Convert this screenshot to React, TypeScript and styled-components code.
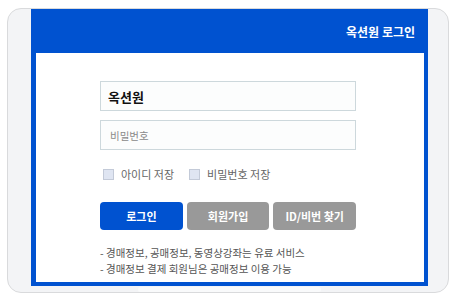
import styled, { createGlobalStyle } from "styled-components";

const GlobalStyle = createGlobalStyle`
    html, body {
        margin: 0;
        padding: 0;
        background: #fff;
        font-family: "Noto Sans CJK KR", "Noto Sans", sans-serif;
    }
`;

const App = () => {
    return (
        <>
            <GlobalStyle/>
            <Frame>
                <Panel>
                    <Header>
                        <HeaderTitle>옥션원 로그인</HeaderTitle>
                    </Header>
                    <Body>
                        <Field $filled>옥션원</Field>
                        <Field>비밀번호</Field>
                        <CheckRow>
                            <CheckItem>
                                <CheckBox/>
                                <CheckLabel>아이디 저장</CheckLabel>
                            </CheckItem>
                            <CheckItem>
                                <CheckBox/>
                                <CheckLabel>비밀번호 저장</CheckLabel>
                            </CheckItem>
                        </CheckRow>
                        <ButtonRow>
                            <Button $primary>로그인</Button>
                            <Button>회원가입</Button>
                            <Button>ID/비번 찾기</Button>
                        </ButtonRow>
                        <Notes>
                            <li>- 경매정보, 공매정보, 동영상강좌는 유료 서비스</li>
                            <li>- 경매정보 결제 회원님은 공매정보 이용 가능</li>
                        </Notes>
                    </Body>
                </Panel>
                <Peek/>
            </Frame>
        </>
    );
}

export default App;

const Frame = styled.div`
    margin: 8px 0 0 7px;
    width: 442px;
    height: 285px;
    box-sizing: border-box;
    border: 1px solid #d9dadc;
    border-radius: 14px;
    background: #f3f4f6;
    overflow: hidden;
    display: flex;
    flex-direction: column;
    padding-left: 23px;
`;

const Panel = styled.div`
    width: 397px;
    height: 277px;
    box-sizing: border-box;
    background: #0052d0;
    padding: 0 4px 4px 5px;
    display: flex;
    flex-direction: column;
    flex-shrink: 0;
`;

const Header = styled.div`
    height: 44px;
    display: flex;
    align-items: center;
    justify-content: flex-end;
    padding-right: 9px;
    flex-shrink: 0;
`;

const HeaderTitle = styled.span`
    color: #fff;
    font-size: 12px;
    font-weight: 700;
`;

const Body = styled.div`
    flex: 1;
    background: #fff;
    padding: 28px 68px 0 64px;
    display: flex;
    flex-direction: column;
`;

const Field = styled.div<{ $filled?: boolean }>`
    height: 30px;
    box-sizing: border-box;
    border: 1px solid #cdd8dc;
    background: #fcfdfd;
    display: flex;
    align-items: center;
    padding-left: ${p => p.$filled ? 7 : 9}px;
    margin-bottom: 9px;
    color: ${p => p.$filled ? '#111' : '#8a8a8a'};
    font-size: ${p => p.$filled ? 13 : 10.5}px;
    font-weight: ${p => p.$filled ? 700 : 400};
`;

const CheckRow = styled.div`
    display: flex;
    align-items: center;
    gap: 15px;
    margin-top: 7px;
    padding-left: 3px;
    height: 16px;
`;

const CheckItem = styled.div`
    display: flex;
    align-items: center;
    gap: 7px;
`;

const CheckBox = styled.span`
    width: 11px;
    height: 11px;
    box-sizing: border-box;
    border: 1px solid #c3cad8;
    background: #dfe5f2;
`;

const CheckLabel = styled.span`
    color: #666;
    font-size: 11px;
`;

const ButtonRow = styled.div`
    display: flex;
    gap: 4px;
    margin-top: 20px;
`;

const Button = styled.div<{ $primary?: boolean }>`
    flex: 1;
    height: 28px;
    border-radius: 4px;
    background: ${p => p.$primary ? '#0052d0' : '#999'};
    color: #fff;
    font-size: 11px;
    font-weight: 700;
    display: flex;
    align-items: center;
    justify-content: center;
`;

const Notes = styled.ul`
    list-style: none;
    margin: 15px 0 0;
    padding: 0;
    color: #555;
    font-size: 10.5px;
    line-height: 16px;
`;

const Peek = styled.div`
    margin: 1px 0 0 107px;
    width: 183px;
    height: 10px;
    border-radius: 4px;
    background: #f9fafb;
`;
